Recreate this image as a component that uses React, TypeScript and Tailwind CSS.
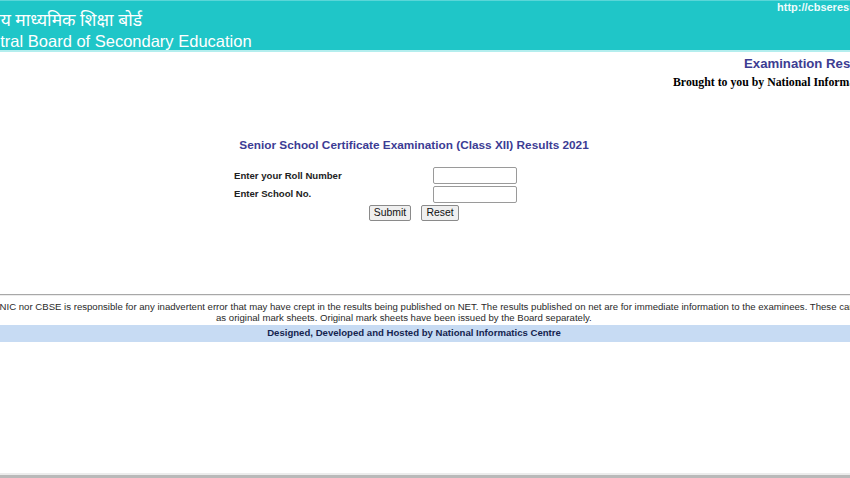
export default function App() {
  return (
    <div className="w-[850px] h-[478px] overflow-hidden bg-white flex flex-col font-['Liberation_Sans',Arial,sans-serif]">
      <div className="w-[1200px] ml-[-186px] flex flex-col">
        {/* header band */}
        <div className="h-[52px] bg-[#1fc6c8] border-t border-[#5ad6d8] border-b-2 border-b-[#b4eeee] flex">
          <div className="w-[963px] pl-[154px] pt-[11px] text-white">
            <div className="text-[17.5px] leading-[20px] font-['Noto_Sans_Devanagari','Lohit_Devanagari','Noto_Sans',sans-serif]">
              केन्द्रीय माध्यमिक शिक्षा बोर्ड
            </div>
            <div className="ml-[2px] text-[16.5px] leading-[18px]">Central Board of Secondary Education</div>
          </div>
          <div className="text-[11px] leading-[13px] font-bold text-[#eefcfc]">http://cbseresults.nic.in</div>
        </div>

        {/* right-aligned captions */}
        <div className="pl-[930px] mt-[4px] text-[13.2px] leading-[16px] font-bold text-[#3d3d92]">Examination Results</div>
        <div className="pl-[859px] mt-[3px] text-[11.8px] leading-[15px] font-bold text-black font-['Liberation_Serif','Times_New_Roman',serif]">
          Brought to you by National Informatics Centre
        </div>

        {/* title */}
        <div className="mt-[47px] text-center text-[11.8px] leading-[16px] font-bold text-[#3c3c94]">
          Senior School Certificate Examination (Class XII) Results 2021
        </div>

        {/* form */}
        <div className="mt-[14px] flex justify-center">
          <div className="w-[360px] grid grid-cols-[199px_161px] gap-y-[2px] items-center text-[9.6px] font-bold text-[#222]">
            <span className="pt-[1px]">Enter your Roll Number</span>
            <input className="w-[84px] h-[17px] border border-[#9a9a9a] rounded-[2px] bg-white" />
            <span>Enter School No.</span>
            <input className="w-[84px] h-[17px] border border-[#9a9a9a] rounded-[2px] bg-white" />
          </div>
        </div>
        <div className="mt-[2px] flex justify-center gap-[10px] text-[10.4px] text-[#111]">
          <button className="w-[42px] h-[16px] leading-[14px] bg-[#efefef] border border-[#8a8a8a] rounded-[2px]">Submit</button>
          <button className="w-[38px] h-[16px] leading-[14px] bg-[#efefef] border border-[#8a8a8a] rounded-[2px]">Reset</button>
        </div>

        {/* disclaimer */}
        <div className="mt-[73px] border-t border-[#a8a8a8] border-b border-b-[#ececec]" />
        <div className="mt-[5px] text-[9.6px] leading-[11px] text-[#2a2a2a] whitespace-nowrap">
          <div className="pl-[152px]">
            Neither NIC nor CBSE is responsible for any inadvertent error that may have crept in the results being published on NET. The results published on net are for immediate information to the examinees. These cannot be treated
          </div>
          <div className="pl-[402px]">as original mark sheets. Original mark sheets have been issued by the Board separately.</div>
        </div>
        <div className="mt-[2px] h-[17px] bg-[#c7dbf3] text-center text-[9.6px] leading-[16px] font-bold text-[#15244f]">
          Designed, Developed and Hosted by National Informatics Centre
        </div>
      </div>
      <div className="mt-auto h-[2px] bg-[#ececec]" />
      <div className="h-[3px] bg-[#b9b9b9]" />
    </div>
  );
}
